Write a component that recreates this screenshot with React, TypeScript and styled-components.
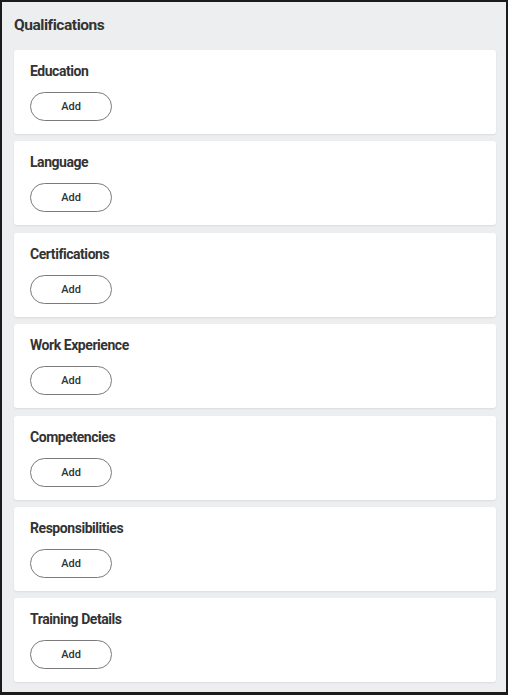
import styled, { createGlobalStyle } from "styled-components";

const GlobalStyle = createGlobalStyle`
  html, body {
    margin: 0;
    padding: 0;
    background: #ffffff;
  }
  * {
    box-sizing: border-box;
  }
`;

const Frame = styled.div`
  width: 508px;
  height: 695px;
  border: 2px solid #1b1b1b;
  border-bottom-width: 3px;
  background-color: #edeef0;
  padding: 13px 10px 0 12px;
  font-family: Roboto, "Liberation Sans", Arial, sans-serif;
  color: #333333;
`;

const PageTitle = styled.h2`
  margin: 0 0 15px 0;
  font-size: 15.5px;
  line-height: 20px;
  font-weight: 700;
  letter-spacing: -0.45px;
  color: #333333;
`;

const CardList = styled.div`
  display: flex;
  flex-direction: column;
  gap: 7.4px;
`;

const Card = styled.section`
  height: 84px;
  background-color: #ffffff;
  border-radius: 3px;
  box-shadow: 0 1px 2px rgba(0, 0, 0, 0.08);
  padding: 13px 16px 0 16px;
  display: flex;
  flex-direction: column;
  align-items: flex-start;
`;

const CardTitle = styled.h3`
  margin: 0 0 12px 0;
  font-size: 14px;
  line-height: 17px;
  font-weight: 700;
  letter-spacing: -0.45px;
  color: #333333;
`;

const AddButton = styled.button`
  width: 82px;
  height: 29px;
  border: 1px solid #7a7a7a;
  border-radius: 15px;
  background-color: #ffffff;
  font-family: Roboto, "Liberation Sans", Arial, sans-serif;
  font-size: 11px;
  font-weight: 500;
  color: #333333;
  cursor: pointer;
  padding: 0;
`;

const sections = [
  "Education",
  "Language",
  "Certifications",
  "Work Experience",
  "Competencies",
  "Responsibilities",
  "Training Details",
];

export default function App() {
  return (
    <>
      <GlobalStyle />
      <Frame>
        <PageTitle>Qualifications</PageTitle>
        <CardList>
          {sections.map((name) => (
            <Card key={name}>
              <CardTitle>{name}</CardTitle>
              <AddButton>Add</AddButton>
            </Card>
          ))}
        </CardList>
      </Frame>
    </>
  );
}
